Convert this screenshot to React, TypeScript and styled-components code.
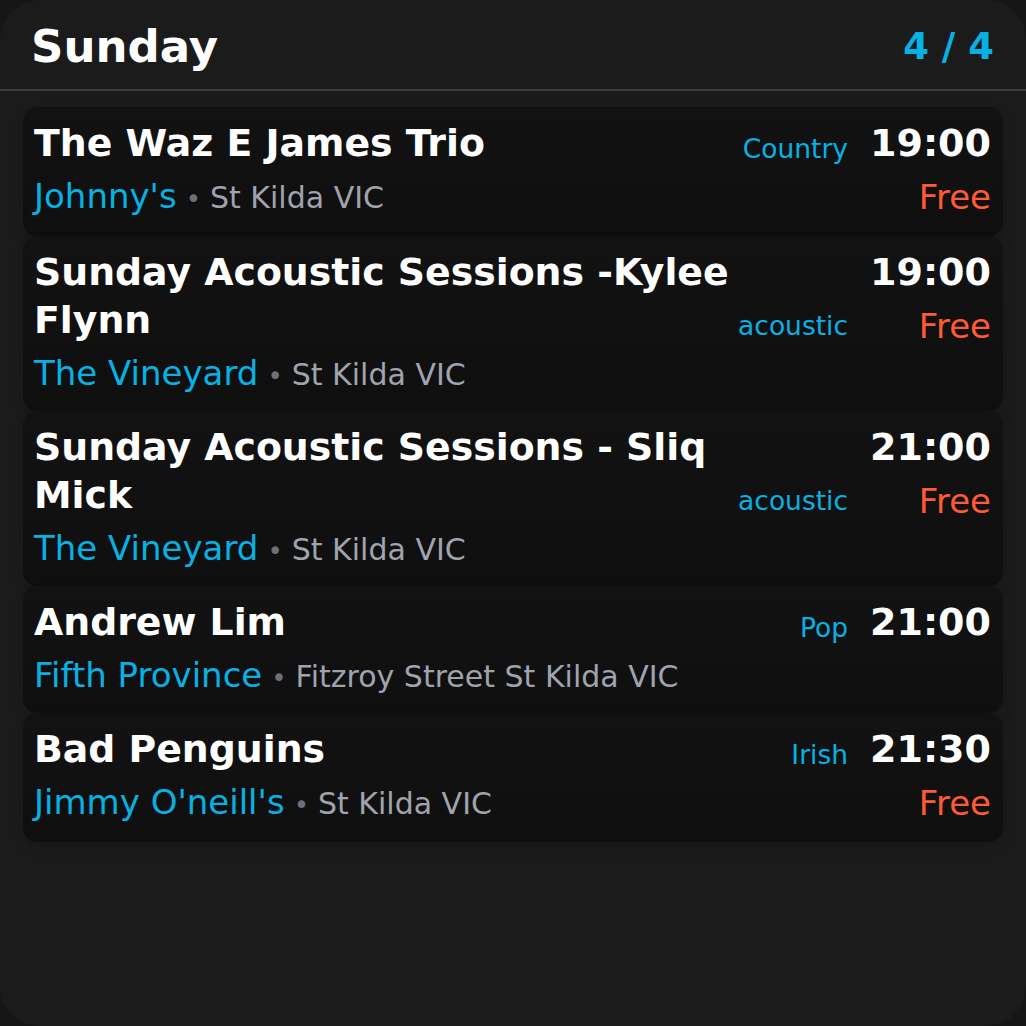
import React from "react";
import styled, { createGlobalStyle } from "styled-components";

const GlobalStyle = createGlobalStyle`
  html, body { margin: 0; padding: 0; background: #161616; }
  body { font-family: "DejaVu Sans", "Noto Sans", sans-serif; }
  * { box-sizing: border-box; }
`;

const Panel = styled.div`
  width: 1026px;
  height: 1026px;
  background: #1b1b1b;
  border-radius: 40px;
  overflow: hidden;
  display: flex;
  flex-direction: column;
`;

const Header = styled.header`
  display: flex;
  align-items: center;
  justify-content: space-between;
  padding: 20px 32px 16px 31px;
  border-bottom: 2px solid #363b45;
`;

const Day = styled.h1`
  margin: 0;
  font-size: 45px;
  line-height: 53px;
  font-weight: 700;
  color: #ffffff;
`;

const Count = styled.span`
  font-size: 37px;
  line-height: 53px;
  font-weight: 700;
  color: #08b1e4;
`;

const List = styled.div`
  display: flex;
  flex-direction: column;
  padding: 16px 23px;
`;

const Card = styled.div`
  display: flex;
  align-items: flex-start;
  gap: 22px;
  padding: 12px 12px 15px 11px;
  border-radius: 14px;
  background: linear-gradient(#121212, #0f0f0f);
  box-shadow: 0 6px 14px rgba(0, 0, 0, 0.12);
`;

const Main = styled.div`
  flex: 1;
  min-width: 0;
  display: flex;
  flex-direction: column;
`;

const TitleRow = styled.div`
  display: flex;
  align-items: flex-end;
  gap: 4px;
`;

const Title = styled.div`
  flex: 1;
  min-width: 0;
  font-size: 37.8px;
  line-height: 48px;
  font-weight: 700;
  color: #ffffff;
`;

const Genre = styled.div`
  font-size: 26.5px;
  line-height: 36px;
  color: #08b1e4;
  white-space: nowrap;
`;

const VenueLine = styled.div`
  margin-top: 7px;
  font-size: 34px;
  line-height: 45px;
  height: 45px;
  white-space: nowrap;
`;

const Venue = styled.span`
  color: #08b1e4;
`;

const Dot = styled.span`
  color: #6b7079;
  font-size: 26px;
  line-height: 1;
  margin: 0 9px;
`;

const Place = styled.span`
  color: #9fa3ad;
  font-size: 30px;
  line-height: 1;
`;

const Side = styled.div`
  display: flex;
  flex-direction: column;
  align-items: flex-end;
`;

const Time = styled.div`
  font-size: 38px;
  line-height: 48px;
  font-weight: 700;
  color: #ffffff;
`;

const Price = styled.div`
  margin-top: 7px;
  font-size: 34px;
  line-height: 47px;
  color: #ff5a36;
`;

type Gig = {
  title: string;
  venue: string;
  place: string;
  genre: string;
  time: string;
  price?: string;
};

const gigs: Gig[] = [
  { title: "The Waz E James Trio", venue: "Johnny's", place: "St Kilda VIC", genre: "Country", time: "19:00", price: "Free" },
  { title: "Sunday Acoustic Sessions -\u2060Kylee Flynn", venue: "The Vineyard", place: "St Kilda VIC", genre: "acoustic", time: "19:00", price: "Free" },
  { title: "Sunday Acoustic Sessions - Sliq Mick", venue: "The Vineyard", place: "St Kilda VIC", genre: "acoustic", time: "21:00", price: "Free" },
  { title: "Andrew Lim", venue: "Fifth Province", place: "Fitzroy Street St Kilda VIC", genre: "Pop", time: "21:00" },
  { title: "Bad Penguins", venue: "Jimmy O'neill's", place: "St Kilda VIC", genre: "Irish", time: "21:30", price: "Free" },
];

export default function App() {
  return (
    <>
      <GlobalStyle />
      <Panel>
        <Header>
          <Day>Sunday</Day>
          <Count>4 / 4</Count>
        </Header>
        <List>
          {gigs.map((g, i) => (
            <Card key={i}>
              <Main>
                <TitleRow>
                  <Title>{g.title}</Title>
                  <Genre>{g.genre}</Genre>
                </TitleRow>
                <VenueLine>
                  <Venue>{g.venue}</Venue>
                  <Dot>•</Dot>
                  <Place>{g.place}</Place>
                </VenueLine>
              </Main>
              <Side>
                <Time>{g.time}</Time>
                {g.price && <Price>{g.price}</Price>}
              </Side>
            </Card>
          ))}
        </List>
      </Panel>
    </>
  );
}
